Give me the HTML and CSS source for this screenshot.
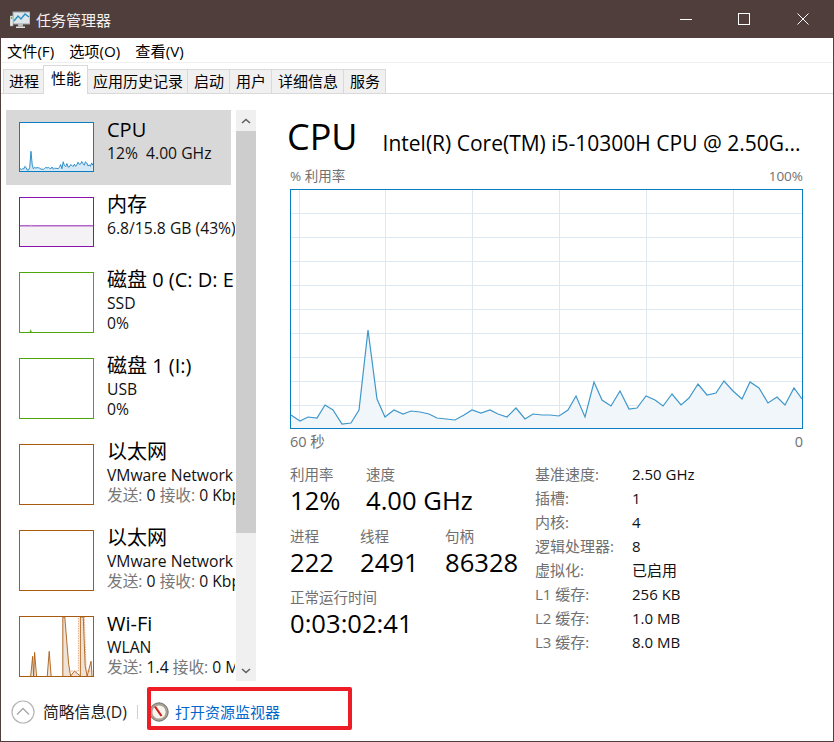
FILE: index.html
```html
<!DOCTYPE html>
<html lang="zh-CN">
<head>
<meta charset="utf-8">
<title>任务管理器</title>
<link rel="stylesheet" href="styles.css">
</head>
<body>
<div class="window">
  <header class="titlebar">
    <svg class="app-icon" width="20" height="18" viewBox="0 0 20 18">
      <rect x="3" y="1" width="17" height="12" fill="#dfe6ea" stroke="#9aa3a8"/>
      <polyline points="4,10 8,5 11,8 15,3 19,6" fill="none" stroke="#2a8fc4" stroke-width="1.4"/>
      <rect x="0" y="5" width="3" height="10" fill="#e8e8e8" stroke="#9a9a9a" stroke-width=".5"/>
      <rect x="0.8" y="6" width="1.6" height="2" fill="#5cc04c"/>
      <rect x="8" y="13" width="5" height="2.5" fill="#bdbdbd"/>
      <rect x="6" y="15.5" width="9" height="1.5" fill="#e2e2e2"/>
    </svg>
    <span class="title">任务管理器</span>
    <div class="controls">
      <span class="ctl"><svg width="12" height="12" viewBox="0 0 12 12"><path d="M0 6.5H12" stroke="#fff"/></svg></span>
      <span class="ctl"><svg width="12" height="12" viewBox="0 0 12 12"><rect x=".5" y=".5" width="11" height="11" fill="none" stroke="#fff"/></svg></span>
      <span class="ctl"><svg width="12" height="12" viewBox="0 0 12 12"><path d="M.5 .5L11.5 11.5M11.5 .5L.5 11.5" stroke="#fff"/></svg></span>
    </div>
  </header>
  <nav class="menu"><span>文件(F)</span><span>选项(O)</span><span>查看(V)</span></nav>
  <div class="tabs">
    <span class="tab">进程</span>
    <span class="tab active">性能</span>
    <span class="tab snug">应用历史记录</span>
    <span class="tab">启动</span>
    <span class="tab">用户</span>
    <span class="tab">详细信息</span>
    <span class="tab">服务</span>
  </div>
  <main class="body">
    <aside class="side">
      <div class="list">
        <div class="item selected">
          <svg class="thumb thumb-cpu" viewBox="291 189 512 239" preserveAspectRatio="none">
            <polygon class="cpu-fill" points="291,428 291,415 300,421 308,417 317,418 325,405 333,410 342,424 351,423 359,410 368,330 377,399 385,417 394,410 403,414 411,411 420,412 429,414 437,418 446,419 455,420 464,415 472,410 481,413 490,410 498,414 507,417 516,408 525,419 533,414 542,415 550,415 559,416 568,410 576,396 585,417 594,382 602,400 611,406 620,391 629,409 637,408 646,396 655,400 663,406 672,394 681,405 689,398 698,384 707,395 716,393 724,381 733,391 742,399 750,382 759,388 768,403 777,397 785,405 794,388 802,399 802,428"/>
            <polyline class="cpu-line" points="291,415 300,421 308,417 317,418 325,405 333,410 342,424 351,423 359,410 368,330 377,399 385,417 394,410 403,414 411,411 420,412 429,414 437,418 446,419 455,420 464,415 472,410 481,413 490,410 498,414 507,417 516,408 525,419 533,414 542,415 550,415 559,416 568,410 576,396 585,417 594,382 602,400 611,406 620,391 629,409 637,408 646,396 655,400 663,406 672,394 681,405 689,398 698,384 707,395 716,393 724,381 733,391 742,399 750,382 759,388 768,403 777,397 785,405 794,388 802,399"/>
          </svg>
          <div class="info">
            <div class="name">CPU</div>
            <div class="sub">12%&nbsp; 4.00 GHz</div>
          </div>
        </div>
        <div class="item">
          <svg class="thumb thumb-mem" viewBox="0 0 75 50" preserveAspectRatio="none">
            <rect x="0" y="29" width="75" height="21" fill="#f4f2f4"/>
            <path d="M0 29H75" stroke="#8b12ae" stroke-width="1"/>
            <path d="M10 28.5H13" stroke="#c98bd8" stroke-width="1"/>
          </svg>
          <div class="info">
            <div class="name">内存</div>
            <div class="sub">6.8/15.8 GB (43%)</div>
          </div>
        </div>
        <div class="item tall">
          <svg class="thumb thumb-disk" viewBox="0 0 75 60" preserveAspectRatio="none">
            <path d="M10 60L11 57L12 60Z" fill="#4da60c"/>
          </svg>
          <div class="info">
            <div class="name">磁盘 0 (C: D: E:)</div>
            <div class="sub">SSD</div>
            <div class="sub">0%</div>
          </div>
        </div>
        <div class="item tall">
          <svg class="thumb thumb-disk" viewBox="0 0 75 60"></svg>
          <div class="info">
            <div class="name">磁盘 1 (I:)</div>
            <div class="sub">USB</div>
            <div class="sub">0%</div>
          </div>
        </div>
        <div class="item tall">
          <svg class="thumb thumb-net" viewBox="0 0 75 60"></svg>
          <div class="info">
            <div class="name">以太网</div>
            <div class="sub">VMware Network Adapter</div>
            <div class="sub"><i>发送:</i> 0 <i>接收:</i> 0 Kbps</div>
          </div>
        </div>
        <div class="item tall">
          <svg class="thumb thumb-net" viewBox="0 0 75 60"></svg>
          <div class="info">
            <div class="name">以太网</div>
            <div class="sub">VMware Network Adapter</div>
            <div class="sub"><i>发送:</i> 0 <i>接收:</i> 0 Kbps</div>
          </div>
        </div>
        <div class="item tall">
          <svg class="thumb thumb-net" viewBox="0 0 75 60" preserveAspectRatio="none">
            <path d="M11 60L13 40L14 60L15 36L17 60M28 60L30 35L32 60M44 60V0H46L50 48L52 60L56 55L62 60V0H65L67 50L69 60L73 45L74 60" fill="#f0e2d4" stroke="#a85a10" stroke-width=".9"/>
            <path d="M50 55H60V0M66 0L68 55H75" fill="none" stroke="#d9905a" stroke-width=".8" stroke-dasharray="1.5 1"/>
          </svg>
          <div class="info">
            <div class="name">Wi-Fi</div>
            <div class="sub">WLAN</div>
            <div class="sub"><i>发送:</i> 1.4 <i>接收:</i> 0 Mbps</div>
          </div>
        </div>
      </div>
      <div class="scrollbar">
        <span class="arrow"><svg width="10" height="6" viewBox="0 0 10 6"><path d="M1 5L5 1.5L9 5" fill="none" stroke="#606060" stroke-width="1.6"/></svg></span>
        <div class="track"><div class="thumb-bar"></div></div>
        <span class="arrow"><svg width="10" height="6" viewBox="0 0 10 6"><path d="M1 1L5 4.5L9 1" fill="none" stroke="#606060" stroke-width="1.6"/></svg></span>
      </div>
    </aside>
    <section class="detail">
      <div class="head">
        <h1>CPU</h1>
        <div class="model">Intel(R) Core(TM) i5-10300H CPU @ 2.50G...</div>
      </div>
      <div class="axis top"><span>% 利用率</span><span>100%</span></div>
      <svg class="chart" width="514" height="241" viewBox="290 188 514 241">
        <g class="grid">
          <path d="M291 213.5H802M291 237.5H802M291 261.5H802M291 285.5H802M291 309.5H802M291 333.5H802M291 357.5H802M291 381.5H802M291 405.5H802"/>
          <path d="M299.5 189V428M385.5 189V428M472.5 189V428M559.5 189V428M646.5 189V428M733.5 189V428"/>
        </g>
        <polygon class="cpu-fill" points="291,428 291,415 300,421 308,417 317,418 325,405 333,410 342,424 351,423 359,410 368,330 377,399 385,417 394,410 403,414 411,411 420,412 429,414 437,418 446,419 455,420 464,415 472,410 481,413 490,410 498,414 507,417 516,408 525,419 533,414 542,415 550,415 559,416 568,410 576,396 585,417 594,382 602,400 611,406 620,391 629,409 637,408 646,396 655,400 663,406 672,394 681,405 689,398 698,384 707,395 716,393 724,381 733,391 742,399 750,382 759,388 768,403 777,397 785,405 794,388 802,399 802,428"/>
        <polyline class="cpu-line" points="291,415 300,421 308,417 317,418 325,405 333,410 342,424 351,423 359,410 368,330 377,399 385,417 394,410 403,414 411,411 420,412 429,414 437,418 446,419 455,420 464,415 472,410 481,413 490,410 498,414 507,417 516,408 525,419 533,414 542,415 550,415 559,416 568,410 576,396 585,417 594,382 602,400 611,406 620,391 629,409 637,408 646,396 655,400 663,406 672,394 681,405 689,398 698,384 707,395 716,393 724,381 733,391 742,399 750,382 759,388 768,403 777,397 785,405 794,388 802,399"/>
        <rect x="290.5" y="189.5" width="512" height="239" fill="none" stroke="#0b7dc1"/>
      </svg>
      <div class="axis bottom"><span>60 秒</span><span>0</span></div>
      <div class="stats">
        <div class="stats-left">
          <div class="row row-a">
            <div class="stat s-util"><label>利用率</label><b>12%</b></div>
            <div class="stat"><label>速度</label><b>4.00 GHz</b></div>
          </div>
          <div class="row row-b">
            <div class="stat s-proc"><label>进程</label><b>222</b></div>
            <div class="stat s-thr"><label>线程</label><b>2491</b></div>
            <div class="stat"><label>句柄</label><b>86328</b></div>
          </div>
          <div class="stat s-up"><label>正常运行时间</label><b>0:03:02:41</b></div>
        </div>
        <dl class="specs">
          <dt>基准速度:</dt><dd>2.50 GHz</dd>
          <dt>插槽:</dt><dd>1</dd>
          <dt>内核:</dt><dd>4</dd>
          <dt>逻辑处理器:</dt><dd>8</dd>
          <dt>虚拟化:</dt><dd>已启用</dd>
          <dt>L1 缓存:</dt><dd>256 KB</dd>
          <dt>L2 缓存:</dt><dd>1.0 MB</dd>
          <dt>L3 缓存:</dt><dd>8.0 MB</dd>
        </dl>
      </div>
    </section>
  </main>
  <footer class="footer">
    <svg class="collapse" width="24" height="24" viewBox="0 0 24 24">
      <circle cx="12" cy="12" r="11" fill="#fff" stroke="#b5b5b5" stroke-width="1.2"/>
      <path d="M6 14.5L12 8.5L18 14.5" fill="none" stroke="#a8a8a8" stroke-width="1.4"/>
    </svg>
    <span class="brief">简略信息(D)</span>
    <span class="sep"></span>
    <svg class="gauge" width="20" height="20" viewBox="0 0 20 20">
      <circle cx="10" cy="10" r="9.2" fill="#a8a294" stroke="#77736a"/>
      <circle cx="10" cy="10" r="6.6" fill="#f7f5ee"/>
      <path d="M6 4.5L12.5 14" stroke="#c8231b" stroke-width="2.2"/>
    </svg>
    <a class="open">打开资源监视器</a>
    <div class="annot"></div>
  </footer>
</div>
</body>
</html>
```
FILE: styles.css
```css
* { box-sizing: border-box; }
html, body { margin: 0; padding: 0; }
body {
  width: 834px;
  height: 742px;
  overflow: hidden;
  background: #fff;
  font-family: "Open Sans", "Noto Sans CJK SC", sans-serif;
  color: #000;
}
.window {
  width: 834px;
  height: 742px;
  display: flex;
  flex-direction: column;
  border-left: 1px solid #4f3e3c;
  border-right: 1px solid #4f3e3c;
  border-bottom: 1px solid #4f3e3c;
  background: #fff;
}
.titlebar {
  height: 38px;
  flex: none;
  margin: 0 -1px;
  display: flex;
  align-items: center;
  background: #4f3e3c;
  color: #f4f1f0;
  padding-left: 10px;
}
.app-icon { flex: none; margin-top: 1px; }
.title { font-size: 15px; margin-left: 6px; }
.controls { margin-left: auto; display: flex; margin-right: 2px; }
.ctl {
  width: 58.5px;
  height: 38px;
  display: flex;
  align-items: center;
  justify-content: center;
}
.menu {
  height: 24px;
  flex: none;
  display: flex;
  gap: 15px;
  align-items: center;
  padding-left: 6px;
  font-size: 15.2px;
  background: #fff;
}
.tabs {
  height: 32px;
  flex: none;
  display: flex;
  align-items: flex-end;
  padding: 3px 0 0 2px;
  border-top: 1px solid #f0f0f0;
  border-bottom: 1px solid #d9d9d9;
  background: #fff;
}
.tab {
  height: 25px;
  margin-bottom: -1px;
  padding: 0 5px 0 6px;
  font-size: 15px;
  line-height: 23px;
  background: #f0f0f0;
  border: 1px solid #d9d9d9;
  border-left: 0;
  white-space: nowrap;
}
.tab.snug { padding: 0 4px 0 5px; }
.tab:first-child { border-left: 1px solid #d9d9d9; padding: 0 4px 0 5px; }
.tab.active {
  height: 29px;
  background: #fff;
  border: 1px solid #d9d9d9;
  border-bottom: 0;
  margin: 0 0 -1px -1px;
  padding: 0 6px 0 7px;
  line-height: 25px;
  position: relative;
  z-index: 1;
}
.body { flex: none; height: 588px; display: flex; min-height: 0; }
.side {
  width: 255px;
  flex: none;
  display: flex;
  height: 587px;
  padding: 16px 0 0 0;
}
.list {
  width: 234px;
  flex: none;
  overflow: hidden;
  padding-left: 5px;
}
.item {
  height: 75px;
  width: 225px;
  display: flex;
  align-items: flex-start;
  padding: 12px 0 0 13px;
  white-space: nowrap;
}
.item.tall { height: 86px; }
.item.selected { background: #d8d8d8; }
.thumb {
  width: 75px;
  height: 50px;
  flex: none;
  border: 1px solid;
  display: block;
  background: #fff;
}
.tall .thumb { height: 61px; }
.thumb-cpu { border-color: #0b7dc1; }
.thumb-mem { border-color: #8b12ae; }
.thumb-disk { border-color: #4da60c; }
.thumb-net { border-color: #a85a10; }
.cpu-fill { fill: #f1f6fa; }
.cpu-line { fill: none; stroke: #3f97cc; stroke-width: 1.2; }
.thumb .cpu-fill { fill: #d5e8f5; }
.thumb .cpu-line { stroke: #2d8fc9; stroke-width: 1; vector-effect: non-scaling-stroke; }
.info { margin-left: 13px; width: 200px; margin-top: -4px; }
.name { font-size: 20px; line-height: 24px; }
.sub { font-size: 15.7px; line-height: 20px; color: #111; }
.name + .sub { margin-top: 1px; }
.sub i { font-style: normal; color: #777; }
.scrollbar {
  width: 20px;
  height: 571px;
  margin-left: 1px;
  flex: none;
  background: #f0f0f0;
  display: flex;
  flex-direction: column;
}
.arrow { height: 21px; flex: none; display: flex; align-items: center; justify-content: center; }
.track { flex: 1; }
.thumb-bar { height: 402px; background: #cdcdcd; }
.detail { flex: 1; min-width: 0; padding: 0 30px 0 34px; }
.head { display: flex; height: 52px; margin-top: 17px; margin-left: -3px; }
.head h1 { margin: 0; font-weight: 400; font-size: 36px; line-height: 52px; }
.model { margin-left: 25px; font-size: 21px; line-height: 52px; margin-top: 6px; white-space: nowrap; }
.axis {
  display: flex;
  justify-content: space-between;
  color: #707070;
  font-size: 13.5px;
}
.axis.top { height: 20px; line-height: 18px; margin-top: 4px; }
.axis.bottom { height: 20px; line-height: 26px; font-size: 14.5px; }
.chart { display: block; margin-top: 1px; }
.grid path { stroke: #dde8f1; stroke-width: 1; fill: none; }
.stats { display: flex; margin-top: 16px; }
.stats-left { width: 245px; flex: none; }
.stat label { display: block; font-size: 14.5px; line-height: 20px; color: #707070; }
.stat b { display: block; font-weight: 400; font-size: 25.6px; line-height: 31px; white-space: nowrap; }
.row { display: flex; }
.row-b { margin-top: 11px; }
.s-util { width: 76px; }
.s-proc { width: 70px; }
.s-thr { width: 85px; }
.s-up { margin-top: 10px; }
.specs {
  margin: -1px 0 0;
  display: grid;
  grid-template-columns: 97px auto;
  grid-auto-rows: 24px;
  font-size: 15px;
  line-height: 20px;
}
.specs dt { color: #707070; }
.specs dd { margin: 0; color: #111; }
.footer {
  flex: none;
  height: 59px;
  display: flex;
  align-items: center;
  padding-left: 10px;
  position: relative;
  font-size: 15px;
}
.brief { margin-left: 8px; color: #222; font-size: 15.8px; }
.sep { width: 1px; height: 14px; background: #cfcfcf; margin-left: 10px; }
.gauge { margin-left: 11px; flex: none; }
.open { margin-left: 6px; color: #0066cc; font-size: 15px; }
.annot {
  position: absolute;
  left: 146px;
  top: 5px;
  width: 205px;
  height: 43px;
  border: 4px solid #ee1c25;
  border-radius: 2px;
}
```
